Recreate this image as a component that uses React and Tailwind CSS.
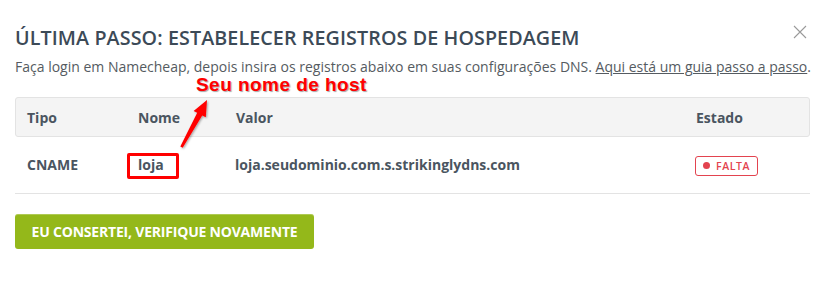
import React from "react";

export default function App() {
  return (
    <div className="w-[836px] h-[289px] bg-white relative" style={{ fontFamily: '"Open Sans", sans-serif' }}>
      <div className="px-[15px] pt-[24px]">
        <h1 className="text-[19.7px] leading-[28px] font-semibold text-[#3c4a57] tracking-[0.1px]">
          ÚLTIMA PASSO: ESTABELECER REGISTROS DE HOSPEDAGEM
        </h1>
        <p className="mt-[5px] text-[14px] leading-[20px] text-[#555b61]">
          Faça login em Namecheap, depois insira os registros abaixo em suas configurações DNS.{" "}
          <span className="underline">Aqui está um guia passo a passo</span>.
        </p>
        <div className="mt-[20px] w-[795px]">
          <div className="flex items-center h-[40px] bg-[#f4f4f4] border border-[#e3e3e3] rounded-[3px] text-[14px] font-bold text-[#4a5560]">
            <div className="w-[122px] pl-[11px]">Tipo</div>
            <div className="w-[98px]">Nome</div>
            <div className="w-[460px]">Valor</div>
            <div>Estado</div>
          </div>
          <div className="flex items-center h-[57px] border-b border-[#e3e3e3] text-[14px] leading-[20px] font-bold text-[#4a5560]">
            <div className="w-[122px] pl-[12px]">CNAME</div>
            <div className="w-[98px] relative pl-[1px]">
              loja
              <span className="absolute left-[-10px] top-[-2px] w-[52px] h-[26px] border-[3px] border-[#ff0000] rounded-[2px]"></span>
            </div>
            <div className="w-[460px]">loja.seudominio.com.s.strikinglydns.com</div>
            <div>
              <span className="inline-flex items-center gap-[6px] h-[20px] px-[7px] border border-[#e3434f] rounded-[3px] text-[10.5px] leading-none font-semibold tracking-[0.6px] text-[#e3434f]">
                <span className="w-[7px] h-[7px] rounded-full bg-[#e3434f]"></span>
                FALTA
              </span>
            </div>
          </div>
        </div>
        <button className="mt-[20px] w-[299px] h-[35px] bg-[#94b81a] rounded-[3px] text-white text-[14px] font-bold tracking-[-0.2px] shadow-[inset_0_1px_0_rgba(255,255,255,0.25)]">
          EU CONSERTEI, VERIFIQUE NOVAMENTE
        </button>
      </div>

      <button className="absolute left-[793px] top-[25px] w-[14px] h-[14px]">
        <svg width="14" height="14" viewBox="0 0 14 14">
          <path d="M1 1L13 13M13 1L1 13" stroke="#9a9a9a" strokeWidth="1.1" />
        </svg>
      </button>

      <div
        className="absolute left-[196px] top-[74px] text-[19px] font-bold text-[#ff0000] leading-[22px] tracking-[0.45px]"
        style={{ fontFamily: '"Liberation Sans", Arial, sans-serif', textShadow: "1px 1px 1px rgba(0,0,0,0.35)" }}
      >
        Seu nome de host
      </div>

      <svg className="absolute left-0 top-0 pointer-events-none" width="836" height="289" viewBox="0 0 836 289">
        <defs>
          <filter id="sh" x="-50%" y="-50%" width="200%" height="200%">
            <feDropShadow dx="1" dy="1" stdDeviation="0.8" floodColor="#000" floodOpacity="0.35" />
          </filter>
        </defs>
        <g filter="url(#sh)">
          <path d="M180.3 146.5 L197.2 112.8 L193.6 111 L207 100 L205.8 117.3 L202.2 115.5 L182.7 147.8 Z" fill="#ff0000" />
        </g>
      </svg>
    </div>
  );
}
